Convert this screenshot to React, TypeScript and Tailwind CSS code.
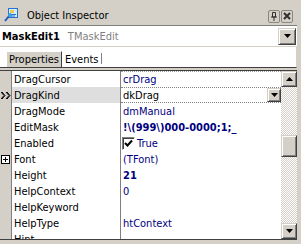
import React from "react";

const font = "font-[family-name:'DejaVu_Sans_Condensed','Liberation_Sans',Arial,sans-serif]";

function DownTri() {
  return (
    <svg width="7" height="4" viewBox="0 0 7 4">
      <path d="M0 0H7L3.5 4Z" fill="#000" />
    </svg>
  );
}
function UpTri() {
  return (
    <svg width="7" height="4" viewBox="0 0 7 4">
      <path d="M0 4H7L3.5 0Z" fill="#000" />
    </svg>
  );
}

function RaisedBtn({ className, children }: { className: string; children?: React.ReactNode }) {
  return (
    <div
      className={
        "flex items-center justify-center bg-[#d4d0c8] border border-t-[#d4d0c8] border-l-[#d4d0c8] border-r-[#404040] border-b-[#404040] shadow-[inset_1px_1px_0_#ffffff,inset_-1px_-1px_0_#808080] " +
        className
      }
    >
      {children}
    </div>
  );
}

type Row = {
  name: string;
  value?: string;
  bold?: boolean;
  kind?: "sel" | "check" | "plus";
};

const rows: Row[] = [
  { name: "DragCursor", value: "crDrag" },
  { name: "DragKind", value: "dkDrag", kind: "sel" },
  { name: "DragMode", value: "dmManual" },
  { name: "EditMask", value: "!\\(999\\)000-0000;1;_", bold: true },
  { name: "Enabled", value: "True", kind: "check" },
  { name: "Font", value: "(TFont)", kind: "plus" },
  { name: "Height", value: "21", bold: true },
  { name: "HelpContext", value: "0" },
  { name: "HelpKeyword", value: "" },
  { name: "HelpType", value: "htContext" },
  { name: "Hint", value: "" },
];

function GridRow({ r, first }: { r: Row; first: boolean }) {
  const sel = r.kind === "sel";
  return (
    <div className="flex h-[16px] shrink-0">
      <div className="w-[12px] shrink-0 bg-[#d4d0c8] border-r border-[#808080] flex items-center justify-center">
        {sel && (
          <svg width="10" height="7" viewBox="0 0 10 7">
            <path d="M0 0L3 3.5L0 7M1 0L4 3.5L1 7M5 0L8 3.5L5 7M6 0L9 3.5L6 7" stroke="#000" strokeWidth="1" fill="none" />
          </svg>
        )}
        {r.kind === "plus" && (
          <svg width="9" height="9" viewBox="0 0 9 9" className="ml-[-1px]">
            <rect x="0.5" y="0.5" width="8" height="8" fill="#fff" stroke="#000" />
            <path d="M2 4.5H7M4.5 2V7" stroke="#000" />
          </svg>
        )}
      </div>
      <div
        className={
          "w-[108px] shrink-0 pl-[2px] flex items-center text-black whitespace-nowrap overflow-hidden " +
          (sel ? "bg-[#dedede]" : "bg-white")
        }
      >
        {r.name}
      </div>
      <div className="w-[1px] shrink-0 bg-[#808080]" />
      <div
        className={
          "flex-1 min-w-0 flex items-center whitespace-nowrap overflow-hidden bg-white " +
          (sel
            ? "border-y border-dotted border-[#808080] text-black pl-[2px]"
            : first
            ? "border-t border-dotted border-[#a0a0a0] pl-[2px] text-[#000080]"
            : "pl-[2px] text-[#000080]") +
          (r.bold ? " font-bold" : "")
        }
      >
        {r.kind === "check" && (
          <div className="w-[13px] h-[13px] mr-[2px] ml-[-1px] bg-white border border-t-[#808080] border-l-[#808080] border-r-white border-b-white shadow-[inset_1px_1px_0_#404040] flex items-center justify-center">
            <svg width="9" height="9" viewBox="0 0 9 9">
              <path d="M1 4L3.5 6.5L8 1.5" stroke="#000" strokeWidth="2" fill="none" />
            </svg>
          </div>
        )}
        <span className="flex-1">{r.value}</span>
        {sel && (
          <RaisedBtn className="w-[14px] h-[14px] mr-[0px]">
            <DownTri />
          </RaisedBtn>
        )}
      </div>
    </div>
  );
}

export default function App() {
  return (
    <div className={"w-[301px] h-[244px] bg-[#d4d0c8] flex flex-col overflow-hidden text-[11px] leading-[13px] " + font}>
      {/* Title bar */}
      <div className="h-[25px] shrink-0 flex items-center pl-[4px] pr-[8px]">
        <svg width="14" height="15" viewBox="0 0 14 15" className="mt-[4px]">
          <rect x="4.5" y="1.5" width="9" height="9" fill="#cfefff" stroke="#2a6fc9" />
          <rect x="6" y="3" width="4" height="3" fill="#f2c94c" />
          <path d="M6 7.5H12M6 9H11" stroke="#2a6fc9" />
          <path d="M1 14L5 9" stroke="#1a5fb4" strokeWidth="2" />
          <circle cx="6" cy="8" r="2" fill="#3aa0e0" />
        </svg>
        <span className="ml-[9px] mt-[6px] text-black">Object Inspector</span>
        <div className="flex-1" />
        <div className="flex gap-[0px] mt-[7px]">
          <div className="w-[12px] h-[13px] rounded-[2px] border border-[#8a8780] flex items-center justify-center">
            <svg width="8" height="9" viewBox="0 0 8 9">
              <path d="M2.5 0.5H5.5V5H2.5Z M1 5H7M4 5V9" stroke="#303030" fill="none" strokeWidth="1" />
            </svg>
          </div>
          <div className="w-[12px] h-[13px] ml-[1px] rounded-[2px] border border-[#8a8780] flex items-center justify-center">
            <svg width="8" height="8" viewBox="0 0 8 8">
              <path d="M1 1L7 7M7 1L1 7" stroke="#303030" strokeWidth="2" />
            </svg>
          </div>
        </div>
      </div>

      {/* Combo */}
      <div className="h-[21px] w-[297px] shrink-0 bg-white border-t border-[#808080] flex items-center">
        <span className="pl-[2px] font-bold text-black">MaskEdit1</span>
        <span className="ml-[8px] text-[#808080]">TMaskEdit</span>
        <div className="flex-1" />
        <RaisedBtn className="w-[18px] h-[17px] mr-[1px]">
          <DownTri />
        </RaisedBtn>
      </div>

      {/* Tabs */}
      <div className="h-[21px] w-[297px] shrink-0 mt-[1px] bg-white border-b border-[#404040] border-r border-r-[#d4d0c8] flex items-end pl-[6px]">
        <div className="h-[16px] px-[2px] bg-[#d4d0c8] border-l border-t border-white border-r border-r-[#404040] flex items-center text-black">
          Properties
        </div>
        <div className="h-[16px] pl-[3px] pr-[3px] flex items-center text-black">Events</div>
        <div className="w-[1px] h-[11px] mb-[3px] bg-[#808080]" />
      </div>

      <div className="h-[2px] shrink-0" />

      {/* Grid */}
      <div className="h-[170px] w-[297px] shrink-0 flex border-t border-b border-[#404040] overflow-hidden">
        <div className="flex-1 min-w-0 flex flex-col overflow-hidden">
          {rows.map((r, i) => (
            <GridRow key={r.name} r={r} first={i === 0} />
          ))}
        </div>
        <div className="w-[16px] shrink-0 flex flex-col">
          <RaisedBtn className="w-[16px] h-[16px] shrink-0">
            <UpTri />
          </RaisedBtn>
          <div className="flex-1 flex flex-col bg-[repeating-conic-gradient(#d4d0c8_0_25%,#ffffff_0_50%)] bg-[length:2px_2px]">
            <div className="h-[48px] shrink-0" />
            <RaisedBtn className="w-[16px] h-[22px] shrink-0" />
          </div>
          <RaisedBtn className="w-[16px] h-[16px] shrink-0">
            <DownTri />
          </RaisedBtn>
        </div>
      </div>
    </div>
  );
}
